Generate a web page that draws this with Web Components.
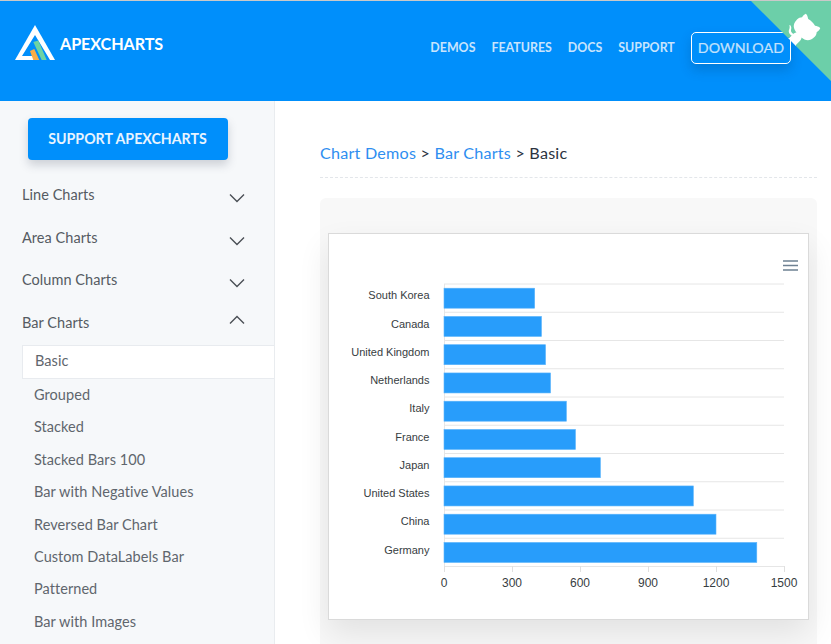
<!DOCTYPE html>
<html lang="en"><head><meta charset="utf-8"><title>ApexCharts Demos</title>
<style>
html,body{margin:0;padding:0;background:#fff}
body{width:831px;height:644px;overflow:hidden;display:flex;flex-direction:column;font-family:Lato,sans-serif;border-top:1px solid #c9c9c9;box-sizing:border-box}
</style></head><body>
<template id="t-header"><style>
:host{display:flex;position:relative;height:100px;background:#008ffb;color:#fff;flex:none;overflow:hidden}
.brand{display:flex;align-items:flex-start;gap:5px;padding:24px 0 0 15px;font:700 16.200px/1 Lato,sans-serif}
.brand span{margin-top:11px;letter-spacing:-.1px}
nav{margin-left:auto;display:flex;align-items:center;height:94px;padding-right:40px;gap:16px;font:700 12.400px/1 Lato,sans-serif}
nav a{color:#c8e4fd}
nav .dl{border:1px solid #fff;border-radius:5px;padding:7px 6px;font:400 14.250px/16px Lato,sans-serif;color:#c4e2fc;box-shadow:0 6px 12px rgba(0,50,100,.22);-webkit-text-stroke:.2px #c4e2fc}
.corner{position:absolute;top:0;right:0}
</style>
<div class="brand"><svg width="40" height="36" viewBox="0 0 40 36"><path fill="#fff" d="M20 0 40 35H0Z"/><path fill="#008ffb" d="M20 10 7 31H20V35H35Z"/><path fill="#6dd3a3" d="M18.300 17 23.300 15.500 31.700 35H26.700Z"/><path fill="#fcad46" d="M15 26 19.300 24 24.300 35H18.300Z"/></svg><span>APEXCHARTS</span></div>
<nav><a>DEMOS</a><a>FEATURES</a><a>DOCS</a><a>SUPPORT</a><a class="dl">DOWNLOAD</a></nav>
<svg class="corner" width="80" height="80" viewBox="0 0 250 250"><path fill="#6ccfa9" d="M0,0 L115,115 L130,115 L142,142 L250,250 L250,0 Z"/><path fill="#fff" d="M128.3,109.0 C113.8,99.7 119.0,89.6 119.0,89.6 C122.0,82.7 120.5,78.6 120.5,78.6 C119.2,72.0 123.4,76.3 123.4,76.3 C127.3,80.9 125.5,87.3 125.5,87.3 C122.9,97.6 130.6,101.9 134.4,103.2"/><path fill="#fff" d="M115.0,115.0 C114.9,115.1 118.7,116.5 119.8,115.4 L133.7,101.6 C136.9,99.2 139.9,98.4 142.2,98.6 C133.8,88.0 127.5,74.4 143.8,58.0 C148.5,53.4 154.0,51.2 159.7,51.0 C160.3,49.4 163.2,43.6 171.4,40.1 C171.4,40.1 176.1,42.5 178.8,56.2 C183.1,58.6 187.2,61.8 190.9,65.4 C194.5,69.0 197.7,73.2 200.1,77.6 C213.8,80.2 216.3,84.9 216.3,84.9 C212.7,93.1 206.9,96.0 205.4,96.6 C205.1,102.4 203.0,107.8 198.3,112.5 C181.9,128.9 168.3,122.5 157.7,114.1 C157.9,116.9 156.7,120.9 152.7,124.9 L141.0,136.5 C139.8,137.7 141.6,141.9 141.8,141.8 Z"/></svg>
</template>
<template id="t-page"><style>:host{display:flex;flex:1;min-height:0}</style><slot name="side"></slot><slot></slot></template>
<template id="t-side"><style>
:host{display:block;width:275px;box-sizing:border-box;flex:none;background:#f6f8fa;border-right:1px solid #e9ecef;overflow:hidden;padding:17px 0 0 0}
.btn{display:block;box-sizing:border-box;margin-left:28px;width:200px;height:42px;padding-right:1px;border-radius:4px;background:#008ffb;color:#e8f4ff;font:700 14.200px/41px Lato,sans-serif;text-align:center;box-shadow:0 5px 10px rgba(60,70,90,.22)}
.list{padding-top:14px}
</style><a class="btn">SUPPORT APEXCHARTS</a><div class="list"><slot></slot></div></template>
<template id="t-group"><style>
:host{display:flex;align-items:center;justify-content:space-between;height:42.6px;box-sizing:border-box;padding:0 29px 0 22px;font:400 14.500px/22px Lato,sans-serif;color:#555b62;letter-spacing:.05px}
svg{flex:none;margin-top:6px}
:host([open]) svg{margin-top:-6px;transform:rotate(180deg)}
span{display:block}
</style><span><slot></slot></span><svg width="16" height="10" viewBox="0 0 16 10"><path d="M1 1.500 8 8.500 15 1.500" fill="none" stroke="#4a4f55" stroke-width="1.400"/></svg></template>
<template id="t-sub"><style>
:host{display:flex;align-items:center;height:32.430px;box-sizing:border-box;padding-left:34px;font:400 14.500px/20px Lato,sans-serif;color:#5f666d;letter-spacing:.06px}
:host([active]){margin:.3px 0 0 22px;height:34px;padding:0 0 2px 12px;background:#fff;border:1px solid #e8ebef;border-right:0}
</style><slot></slot></template>
<template id="t-main"><style>
:host{display:block;flex:1;min-width:0;padding:0 14px 0 45px;overflow:hidden}
.crumb{height:77px;box-sizing:border-box;padding-top:41px;border-bottom:1px dashed #e3e6ea;font:400 16.150px/22px Lato,sans-serif;color:#2b3340;letter-spacing:.22px;white-space:pre}
.crumb a{color:#2e8ef0}
.panel{margin-top:20px;background:#f8f8f8;border-radius:6px 6px 0 0;padding:35px 8px 30px}
</style><div class="crumb"><a>Chart Demos</a> &gt; <a>Bar Charts</a> &gt; Basic</div><div class="panel"><slot></slot></div></template>
<template id="t-chart"><style>
:host{display:block;height:387px;box-sizing:border-box;background:#fff;border:1px solid #dadada;box-shadow:0 14px 30px rgba(0,0,0,.09)}
svg{display:block}
text{font:12px "Liberation Sans",Arial,sans-serif;fill:#373d3f}
text.l{font-size:11px}
</style><svg id="s" width="479" height="385" viewBox="329 234 479 385"></svg></template>
<script>
function reg(name,tid){customElements.define(name,class extends HTMLElement{constructor(){super();this.attachShadow({mode:'open'}).appendChild(document.getElementById(tid).content.cloneNode(true));}});}
reg('app-header','t-header');reg('app-page','t-page');reg('side-nav','t-side');reg('nav-group','t-group');reg('nav-sub','t-sub');reg('main-area','t-main');
customElements.define('bar-chart',class extends HTMLElement{constructor(){super();this.attachShadow({mode:'open'}).appendChild(document.getElementById('t-chart').content.cloneNode(true));
const d=[['South Korea',400],['Canada',430],['United Kingdom',448],['Netherlands',470],['Italy',540],['France',580],['Japan',690],['United States',1100],['China',1200],['Germany',1380]];
const X=444,W=340,T=284,R=28.25;let h='';
for(let i=0;i<=10;i++){const y=T+i*R;h+=`<path d="M${X} ${y}H${X+W}" stroke="#e6e6e6" stroke-width="1"/>`;}
h+=`<path d="M${X}.5 ${T}V${T+10*R}" stroke="#e6e6e6"/>`;
d.forEach((r,i)=>{const y=T+i*R;const w=r[1]/1500*W;
h+=`<rect x="${X}" y="${y+4.2}" width="${w}" height="20" fill="#289dfb" stroke="#5ab4fc" stroke-width=".6"/>`;
h+=`<text class="l" x="429.500" y="${y+15.4}" text-anchor="end">${r[0]}</text>`;});
for(let i=0;i<=5;i++){const x=X+i*W/5;h+=`<path d="M${x+.5} 566V572" stroke="#e0e0e0"/><text x="${x}" y="587" text-anchor="middle">${i*300}</text>`;}
h+=`<path d="M783 261H798M783 265.500H798M783 270H798" stroke="#6e8192" stroke-width="1.600"/>`;
this.shadowRoot.getElementById('s').innerHTML=h;}});
</script>
<app-header></app-header>
<app-page>
<side-nav slot="side">
<nav-group>Line Charts</nav-group><nav-group>Area Charts</nav-group><nav-group>Column Charts</nav-group><nav-group open>Bar Charts</nav-group>
<nav-sub active>Basic</nav-sub><nav-sub>Grouped</nav-sub><nav-sub>Stacked</nav-sub><nav-sub>Stacked Bars 100</nav-sub><nav-sub>Bar with Negative Values</nav-sub><nav-sub>Reversed Bar Chart</nav-sub><nav-sub>Custom DataLabels Bar</nav-sub><nav-sub>Patterned</nav-sub><nav-sub>Bar with Images</nav-sub>
</side-nav>
<main-area><bar-chart></bar-chart></main-area>
</app-page>
</body></html>
